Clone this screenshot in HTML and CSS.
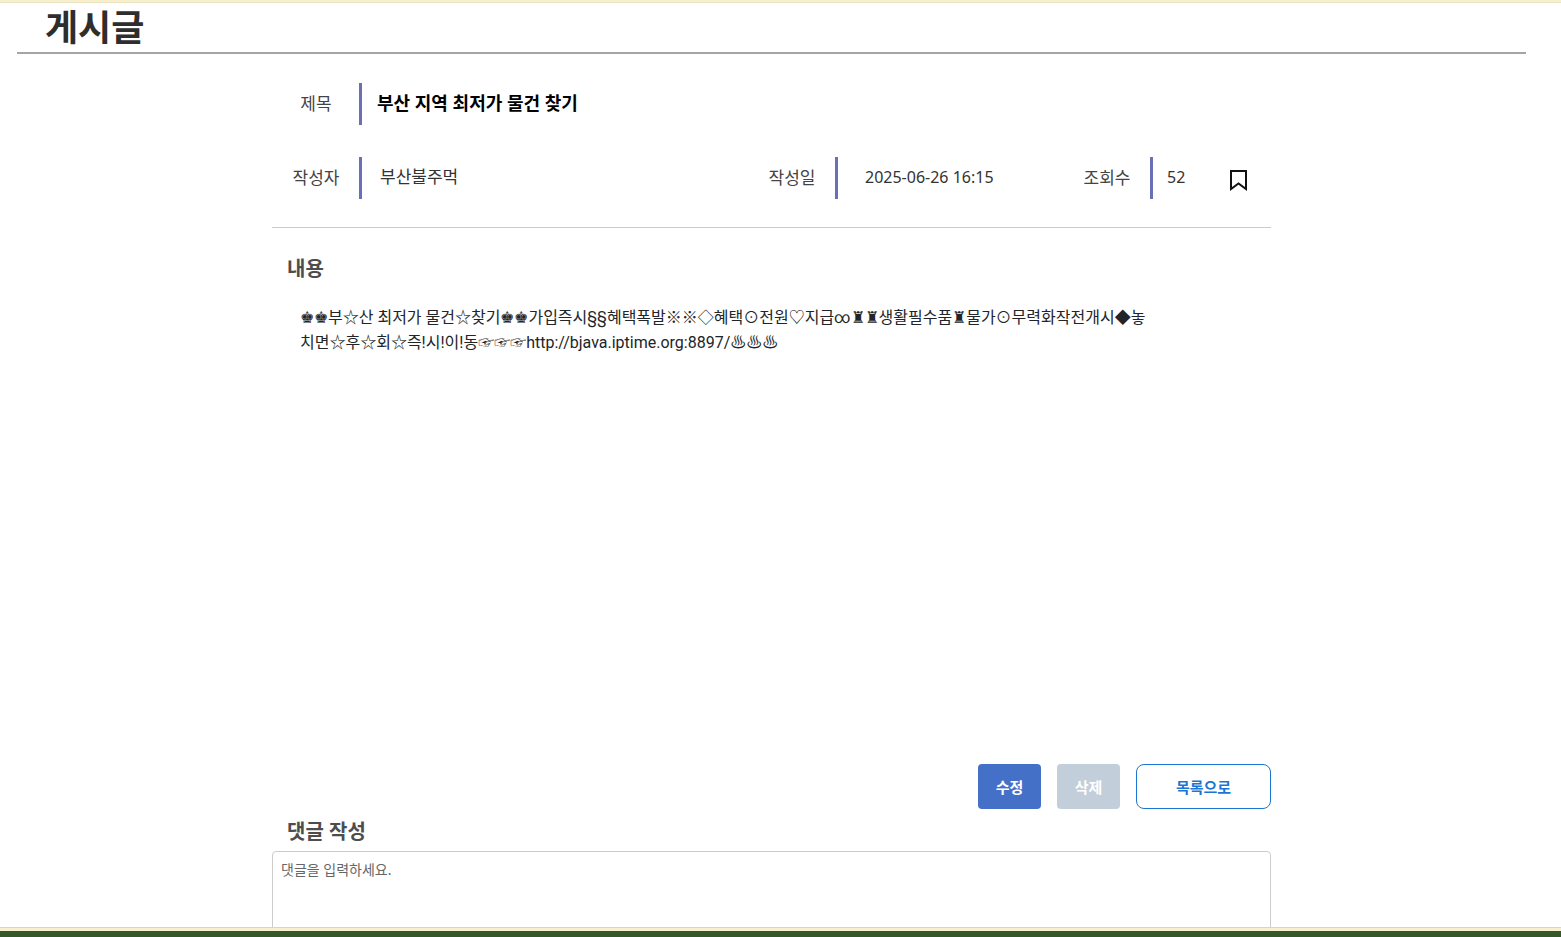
FILE: index.html
```html
<!DOCTYPE html>
<html lang="ko">
<head>
<meta charset="utf-8">
<meta name="viewport" content="width=device-width, initial-scale=1">
<title>게시글</title>
<link rel="stylesheet" href="styles.css">
</head>
<body>
<div class="top-strip"></div>
<main class="page">
  <h1 class="page-title">게시글</h1>
  <article class="post">
    <dl class="meta">
      <dt class="label">제목</dt>
      <dd class="value value-title">부산 지역 최저가 물건 찾기</dd>
      <dt class="label">작성자</dt>
      <dd class="value value-author">부산불주먹</dd>
      <dt class="label">작성일</dt>
      <dd class="value value-date">2025-06-26 16:15</dd>
      <dt class="label">조회수</dt>
      <dd class="value value-views">
        <span>52</span>
        <button class="bookmark" type="button" aria-label="북마크">
          <svg width="18" height="22" viewBox="0 0 18 22" aria-hidden="true"><path d="M1 2H16V20L8.500 14.500L1 20Z" fill="none" stroke="#111" stroke-width="2"/></svg>
        </button>
      </dd>
    </dl>
    <h2 class="section-title">내용</h2>
    <p class="content">♚♚부☆산 최저가 물건☆찾기♚♚가입즉시§§혜택폭발※※◇혜택⊙전원♡지급∞♜♜생활필수품♜물가⊙무력화작전개시◆놓치면☆후☆회☆즉!시!이!동☞☞☞http://bjava.iptime.org:8897/♨♨♨</p>
    <div class="actions">
      <button class="btn btn-edit" type="button">수정</button>
      <button class="btn btn-delete" type="button">삭제</button>
      <button class="btn btn-list" type="button">목록으로</button>
    </div>
    <form class="comment">
      <label class="section-title" for="comment">댓글 작성</label>
      <textarea class="comment-input" id="comment" placeholder="댓글을 입력하세요."></textarea>
    </form>
  </article>
</main>
<div class="bottom-strip"></div>
</body>
</html>
```
FILE: styles.css
```css
* {
  box-sizing: border-box;
}

body {
  display: flex;
  flex-direction: column;
  height: 100vh;
  margin: 0;
  background: #fff;
  color: #212529;
  font-family: "Noto Sans", "Noto Sans CJK KR", sans-serif;
  font-size: 16px;
  line-height: 24px;
}

.top-strip {
  flex: none;
  height: 3px;
  background: #f7f0cf;
  border-bottom: 1px solid #ece3c0;
}

.bottom-strip {
  flex: none;
  height: 10px;
  background: #f7efd0;
  border-top: 1px solid #ddd5b8;
  border-bottom: 6px solid #335929;
}

.page {
  flex: 1;
  min-height: 0;
  padding: 0 35px 0 17px;
  overflow-y: auto;
  scrollbar-width: none;
}

.page-title {
  margin: 0;
  padding: 1px 28px 0;
  border-bottom: 2px solid #a5a5a5;
  color: #2e2e2e;
  font-size: 36px;
  line-height: 48px;
}

.post {
  max-width: 999px;
  margin: 0 auto;
}

.meta {
  display: grid;
  grid-template-columns: 90px 386fr 90px 225fr 90px 118fr;
  row-gap: 32px;
  margin: 0;
  padding: 29px 0 28px;
  border-bottom: 1px solid #ccc;
}

.label {
  padding: 9px 18px 9px 19px;
  border-right: 3px solid #6b70b5;
  color: #444;
  font-size: 17px;
  text-align: center;
  white-space: nowrap;
}

.value {
  margin: 0;
  padding: 8px 0 10px;
  color: #333;
}

.value-title {
  grid-column: span 5;
  padding-left: 15px;
  color: #000;
  font-size: 18px;
  font-weight: 700;
}

.value-author {
  padding-left: 18px;
  font-size: 17px;
}

.value-date {
  padding-left: 27px;
}

.value-views {
  display: flex;
  justify-content: space-between;
  padding-left: 14px;
  padding-right: 23px;
}

.bookmark {
  display: flex;
  align-items: flex-end;
  height: 24px;
  padding: 0;
  border: 0;
  background: none;
  cursor: pointer;
}

.bookmark svg {
  margin-bottom: -2px;
}

.section-title {
  display: block;
  margin: 0;
  padding: 0 15px;
  color: #4d4d4d;
  font-size: 20px;
  font-weight: 700;
  line-height: 32px;
}

h2.section-title {
  margin-top: 25px;
}

.content {
  min-height: 459px;
  margin: 20px 120px 0 28px;
  font-family: Roboto, "Noto Sans CJK KR", sans-serif;
  line-height: 25px;
  word-break: break-all;
}

.actions {
  display: flex;
  justify-content: flex-end;
  gap: 16px;
}

.btn {
  min-width: 63px;
  height: 45px;
  padding: 0 16px;
  border: 0;
  border-radius: 4px;
  color: #fff;
  font: 700 15px/24px "Noto Sans", "Noto Sans CJK KR", sans-serif;
  cursor: pointer;
}

.btn-edit {
  background: #4470c8;
}

.btn-delete {
  background: #c2ceda;
}

.btn-list {
  min-width: 135px;
  border: 1px solid #1976d2;
  border-radius: 8px;
  background: #fff;
  color: #1976d2;
}

.comment {
  padding-top: 7px;
}

.comment-input {
  display: block;
  width: 100%;
  height: 120px;
  margin-top: 3px;
  padding: 8px;
  border: 1px solid #ccc;
  border-radius: 4px;
  font: 14px/20px "Noto Sans", "Noto Sans CJK KR", sans-serif;
  resize: none;
}

.comment-input::placeholder {
  color: #666;
}
```
